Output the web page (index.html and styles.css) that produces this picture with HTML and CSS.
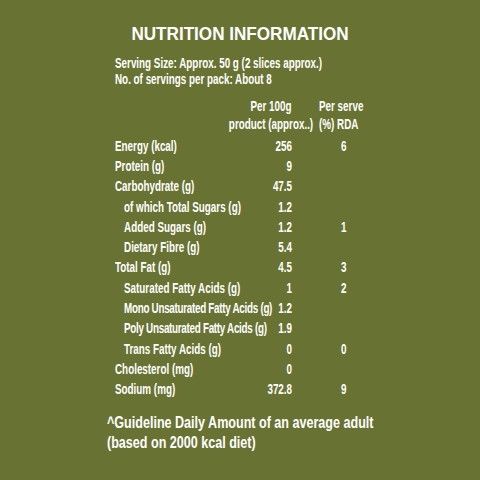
FILE: index.html
```html
<!DOCTYPE html>
<html lang="en">
<head>
    <meta charset="UTF-8">
    <title>Nutrition Information</title>
    <link rel="stylesheet" href="styles.css">
</head>
<body>
<div class="panel">
    <h1 class="title">NUTRITION INFORMATION</h1>
    <div class="facts">
        <p class="serving">Serving Size: Approx. 50 g (2 slices approx.)<br>No. of servings per pack: About 8</p>
        <div class="head">
            <div class="col-100g">Per 100g<br>product (approx..)</div>
            <div class="col-rda">Per serve<br>(%) RDA</div>
        </div>
        <div class="row"><span class="name">Energy (kcal)</span><span class="val">256</span><span class="rda">6</span></div>
        <div class="row"><span class="name">Protein (g)</span><span class="val">9</span><span class="rda"></span></div>
        <div class="row"><span class="name">Carbohydrate (g)</span><span class="val">47.5</span><span class="rda"></span></div>
        <div class="row sub"><span class="name">of which Total Sugars (g)</span><span class="val">1.2</span><span class="rda"></span></div>
        <div class="row sub"><span class="name">Added Sugars (g)</span><span class="val">1.2</span><span class="rda">1</span></div>
        <div class="row sub"><span class="name">Dietary Fibre (g)</span><span class="val">5.4</span><span class="rda"></span></div>
        <div class="row"><span class="name">Total Fat (g)</span><span class="val">4.5</span><span class="rda">3</span></div>
        <div class="row sub"><span class="name">Saturated Fatty Acids (g)</span><span class="val">1</span><span class="rda">2</span></div>
        <div class="row sub long"><span class="name">Mono Unsaturated Fatty Acids (g)</span><span class="val">1.2</span><span class="rda"></span></div>
        <div class="row sub long"><span class="name">Poly Unsaturated Fatty Acids (g)</span><span class="val">1.9</span><span class="rda"></span></div>
        <div class="row sub"><span class="name">Trans Fatty Acids (g)</span><span class="val">0</span><span class="rda">0</span></div>
        <div class="row"><span class="name">Cholesterol (mg)</span><span class="val">0</span><span class="rda"></span></div>
        <div class="row"><span class="name">Sodium (mg)</span><span class="val">372.8</span><span class="rda">9</span></div>
    </div>
    <p class="note">^Guideline Daily Amount of an average adult<br>(based on 2000 kcal diet)</p>
</div>
</body>
</html>
```

FILE: styles.css
```css
html,
body {
    margin: 0;
    padding: 0;
}

body {
    width: 480px;
    height: 480px;
    overflow: hidden;
    background-color: #687232;
    color: #ffffff;
    font-family: "Liberation Sans", Arial, sans-serif;
    font-weight: bold;
}

.panel {
    padding-top: 23.3px;
}

/* the label type is a condensed face, so the text is squeezed */
.title {
    margin: 0;
    font-size: 19px;
    line-height: 22px;
    text-align: center;
    transform: scaleX(0.9);
    transform-origin: center top;
}

.facts {
    width: 441px;
    margin: 10px 0 0 115px;
    font-size: 15.5px;
    transform: scaleX(0.6355);
    transform-origin: left top;
}

.facts .serving {
    margin: 0;
    line-height: 15.4px;
    white-space: nowrap;
}

.facts .head {
    display: flex;
    margin-top: 10.8px;
    padding-left: 170px;
    line-height: 17.7px;
    white-space: nowrap;
}

.facts .head .col-100g {
    width: 151px;
    text-align: center;
}

.facts .head .col-rda {
    text-align: left;
}

.facts .row {
    display: flex;
    line-height: 20.3px;
    white-space: nowrap;
}

.facts .head + .row {
    margin-top: 3.3px;
}

.facts .row .name {
    flex: 1;
    min-width: 0;
}

.facts .row.sub .name {
    padding-left: 14.2px;
}

.facts .row.long .name {
    letter-spacing: -0.45px;
}

.facts .row .val {
    width: 42px;
    text-align: right;
}

.facts .row .rda {
    width: 162.4px;
    text-align: center;
}

.note {
    margin: 13.7px 0 0 107px;
    font-size: 16px;
    line-height: 20px;
    white-space: nowrap;
    transform: scaleX(0.785);
    transform-origin: left top;
}
```
